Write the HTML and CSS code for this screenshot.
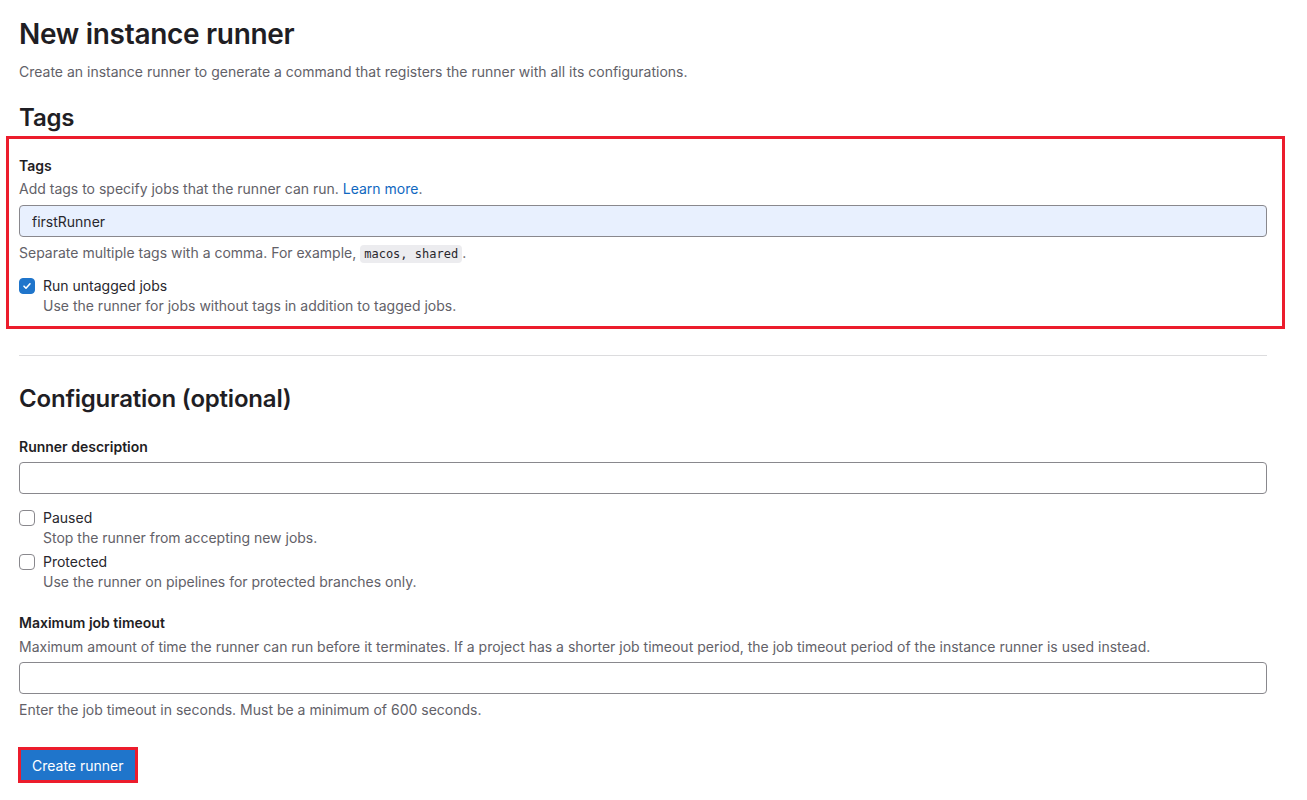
FILE: index.html
```html
<!DOCTYPE html>
<html lang="en">
<head>
  <meta charset="UTF-8" />
  <title>New instance runner</title>
  <link rel="stylesheet" href="styles.css">
</head>
<body>
  <div class="page">
    <h1>New instance runner</h1>
    <p class="lead">Create an instance runner to generate a command that registers the runner with all its configurations.</p>

    <h2 class="section-title">Tags</h2>
    <div class="highlight">
      <label class="field-label" for="tags">Tags</label>
      <p class="field-desc">Add tags to specify jobs that the runner can run. <a href="#">Learn more</a>.</p>
      <input type="text" id="tags" class="input filled" value="firstRunner">
      <p class="field-help">Separate multiple tags with a comma. For example, <code>macos, shared</code>.</p>
      <div class="check-row first">
        <span class="box checked">
          <svg width="10" height="10" viewBox="0 0 10 10"><path d="M2 5.2l2 2 4-4.4" fill="none" stroke="#fff" stroke-width="1.6" stroke-linecap="round" stroke-linejoin="round"/></svg>
        </span>
        <div>
          <div class="check-label">Run untagged jobs</div>
          <div class="check-help">Use the runner for jobs without tags in addition to tagged jobs.</div>
        </div>
      </div>
    </div>

    <hr class="divider">

    <h2 class="section-title config">Configuration (optional)</h2>

    <label class="field-label" for="desc">Runner description</label>
    <input type="text" id="desc" class="input spaced">

    <div class="check-row">
      <span class="box"></span>
      <div>
        <div class="check-label">Paused</div>
        <div class="check-help">Stop the runner from accepting new jobs.</div>
      </div>
    </div>
    <div class="check-row tight">
      <span class="box"></span>
      <div>
        <div class="check-label">Protected</div>
        <div class="check-help">Use the runner on pipelines for protected branches only.</div>
      </div>
    </div>

    <label class="field-label timeout" for="timeout">Maximum job timeout</label>
    <p class="field-desc timeout-desc">Maximum amount of time the runner can run before it terminates. If a project has a shorter job timeout period, the job timeout period of the instance runner is used instead.</p>
    <input type="text" id="timeout" class="input">
    <p class="field-help">Enter the job timeout in seconds. Must be a minimum of 600 seconds.</p>

    <button class="btn-primary">Create runner</button>
  </div>
</body>
</html>
```

FILE: styles.css
```css
body {
  margin: 0;
  font-family: Inter, "Noto Sans", sans-serif;
  font-size: 14px;
  line-height: 20px;
  color: #28272d;
  background-color: #fff;
}
.page {
  width: 1248px;
  margin-left: 19px;
  padding-top: 16px;
}
h1 {
  margin: 1px 0 0 0;
  font-size: 28px;
  line-height: 35px;
  font-weight: 600;
  color: #1f1e24;
  letter-spacing: -0.3px;
}
.lead {
  margin: 10px 0 0 0;
  color: #626168;
}
.section-title {
  margin: 21px 0 0 0;
  font-size: 24px;
  line-height: 30px;
  font-weight: 600;
  color: #1f1e24;
  letter-spacing: -0.2px;
}
.highlight {
  margin: 3px -18px 0 -13px;
  border: 3px solid #ec1c2c;
  padding: 17px 15px 10px 10px;
}
.field-label {
  display: block;
  font-weight: 600;
  color: #1f1e24;
}
.field-desc {
  margin: 3px 0 6px 0;
  color: #626168;
}
.field-desc a {
  color: #1068bf;
  text-decoration: none;
}
.input {
  display: block;
  box-sizing: border-box;
  width: 100%;
  height: 32px;
  padding: 0 12px;
  border: 1px solid #89888d;
  border-radius: 4px;
  font-family: inherit;
  font-size: 14px;
  color: #28272d;
  background-color: #fff;
}
.input.filled {
  background-color: #e8f0fe;
}
.input.spaced {
  margin-top: 5px;
}
.field-help {
  margin: 6px 0 0 0;
  color: #626168;
}
code {
  font-family: "DejaVu Sans Mono", "Liberation Mono", monospace;
  font-size: 12px;
  background-color: #ececef;
  color: #28272d;
  padding: 2px 4px;
  border-radius: 4px;
}
.check-row {
  display: flex;
  gap: 8px;
  margin-top: 14px;
}
.check-row.first {
  margin-top: 12px;
}
.check-row.tight {
  margin-top: 4px;
}
.box {
  box-sizing: border-box;
  width: 16px;
  height: 16px;
  margin-top: 2px;
  border: 1px solid #89888d;
  border-radius: 4px;
  display: flex;
  align-items: center;
  justify-content: center;
  flex-shrink: 0;
}
.box.checked {
  background-color: #1f75cb;
  border-color: #1f75cb;
}
.check-help {
  color: #626168;
}
.divider {
  margin: 26px 0 0 0;
  border: none;
  border-top: 1px solid #dcdcde;
}
.section-title.config {
  margin-top: 28px;
}
.config + .field-label {
  margin-top: 23px;
}
.field-label.timeout {
  margin-top: 21px;
}
.field-desc.timeout-desc {
  margin: 4px 0 5px 0;
}
.btn-primary {
  display: block;
  margin: 27px 0 0 -1px;
  height: 36px;
  padding: 0 11px;
  border: 3px solid #ec1c2c;
  border-radius: 0;
  background-color: #1f75cb;
  color: #fff;
  font-family: inherit;
  font-size: 14px;
  font-weight: 400;
}
```
